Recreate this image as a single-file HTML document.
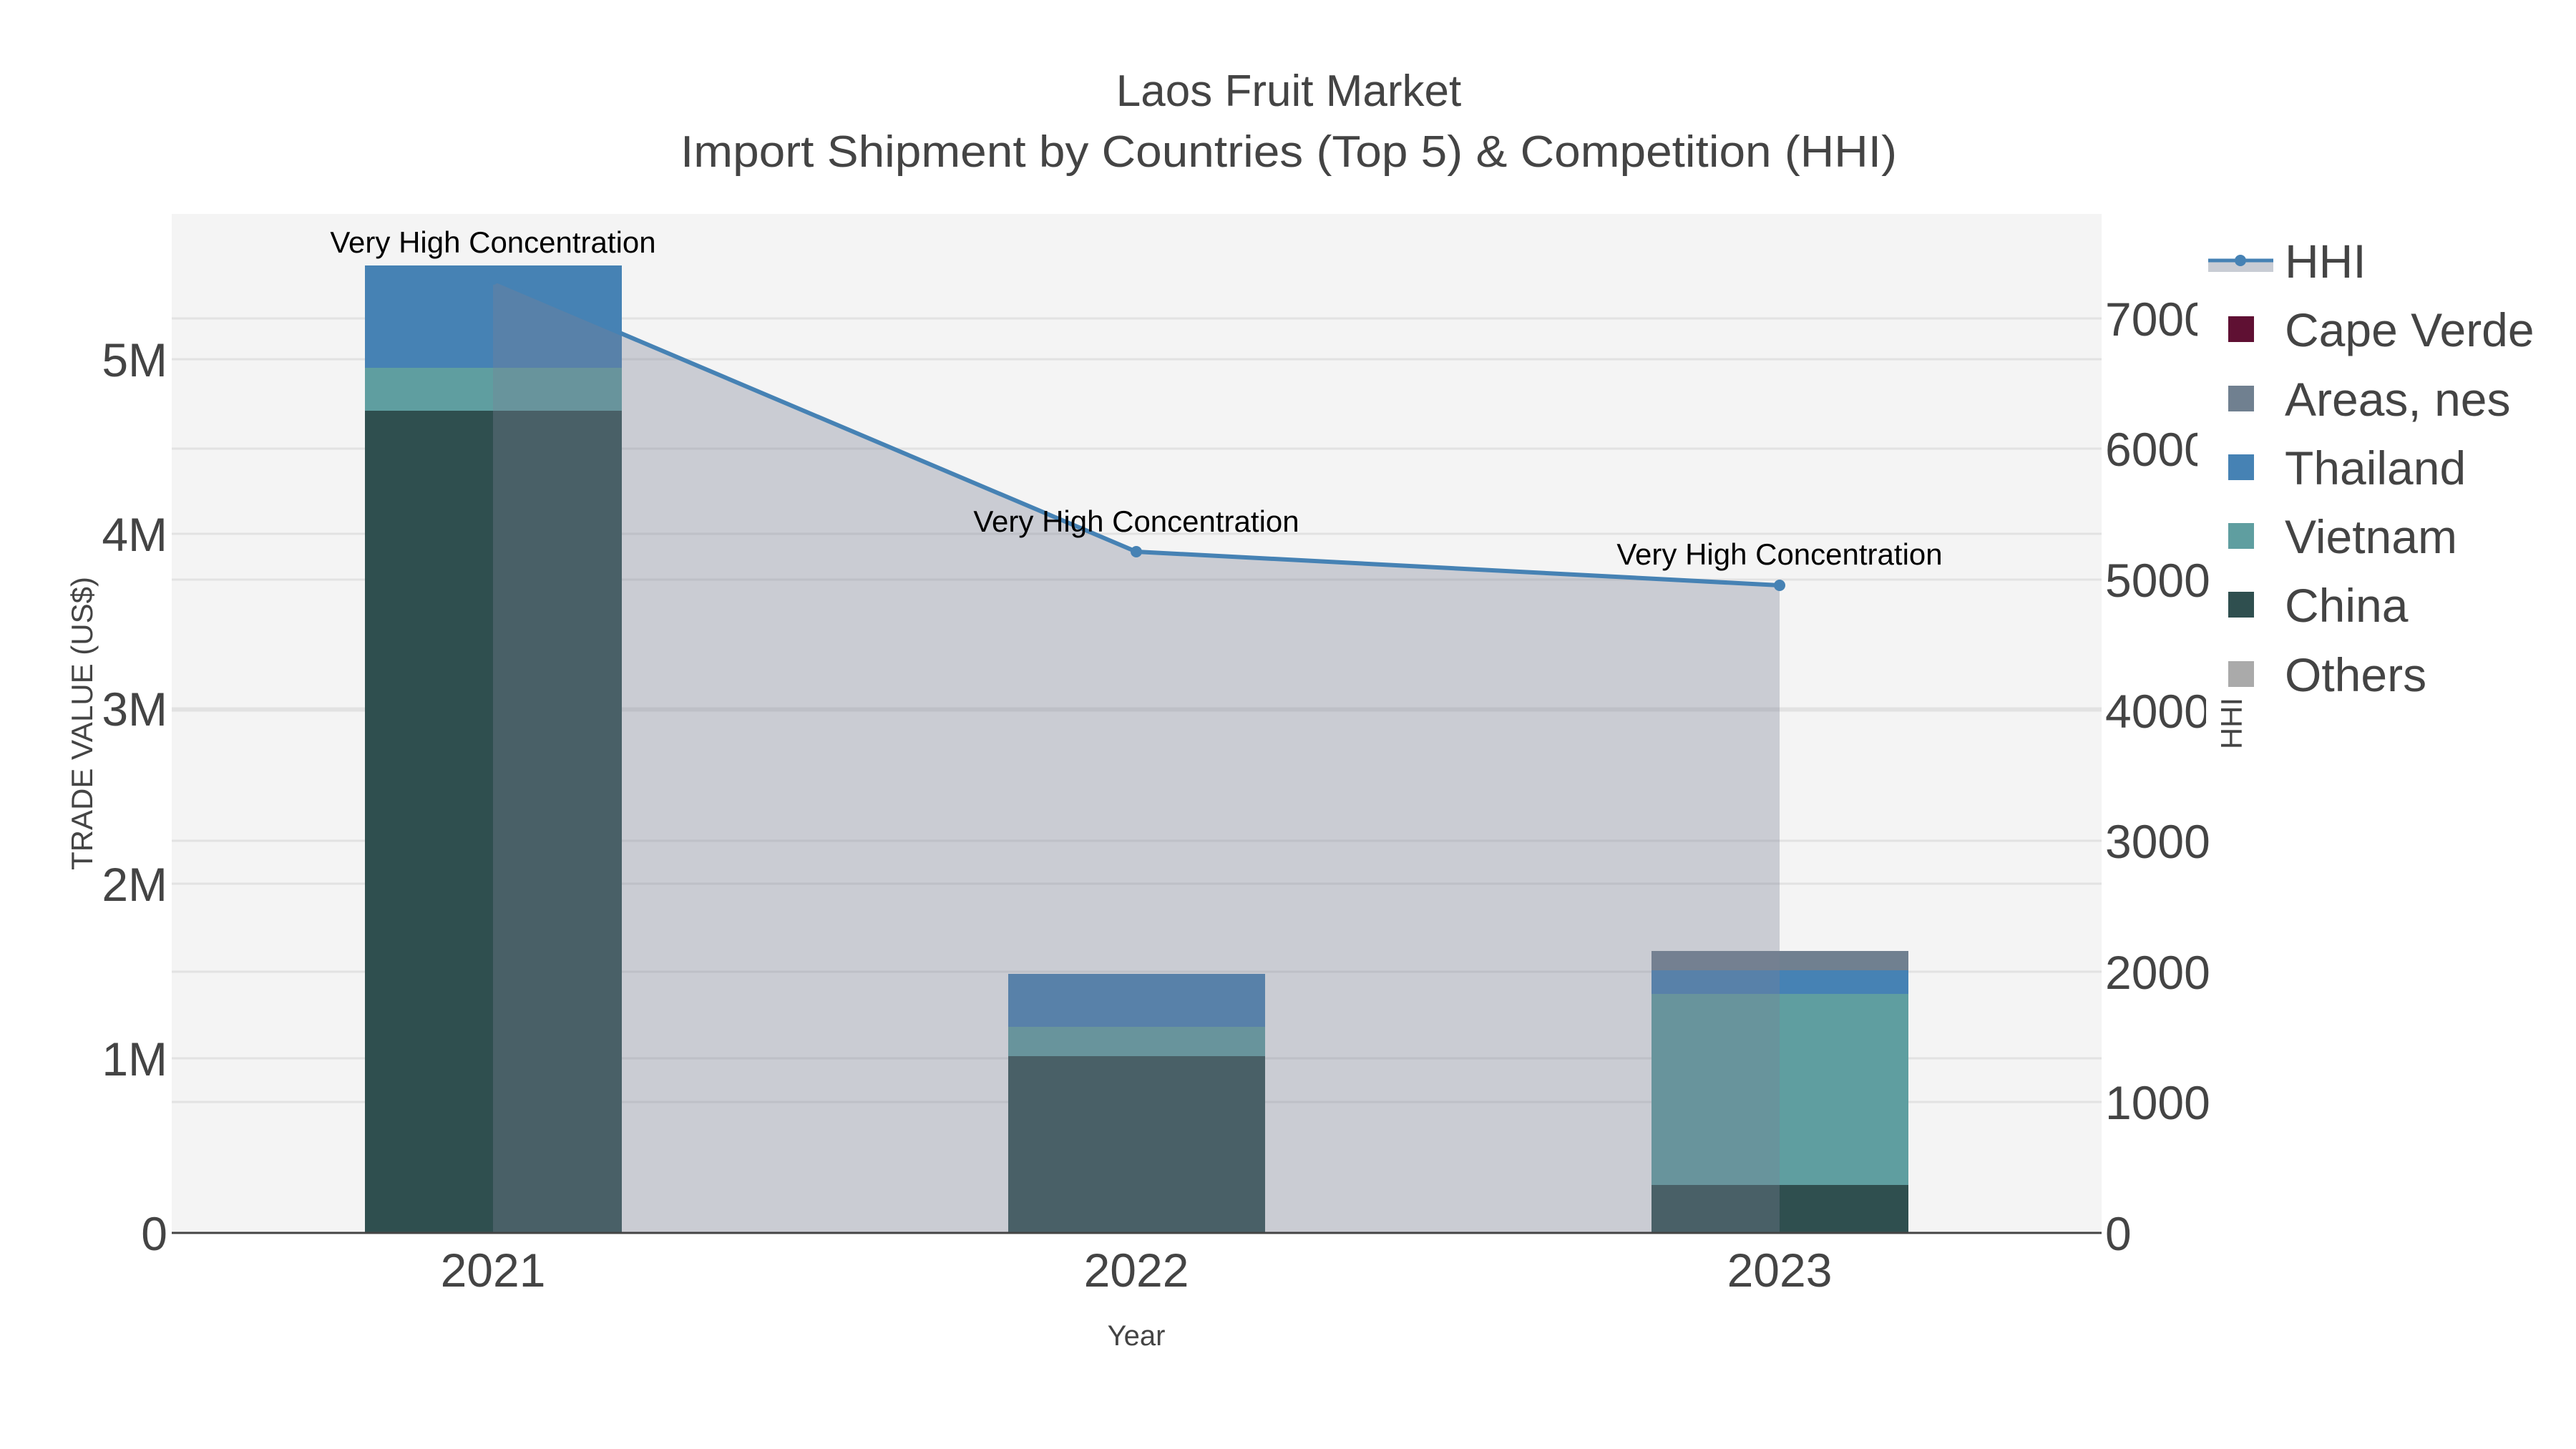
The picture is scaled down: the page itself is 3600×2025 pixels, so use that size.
<!DOCTYPE html>
<html><head><meta charset="utf-8"><style>html,body{margin:0;padding:0;background:#fff}svg{display:block}</style></head>
<body>
<svg width="3600" height="2025" viewBox="0 0 3600 2025" xmlns="http://www.w3.org/2000/svg" font-family="Liberation Sans, Arial, sans-serif">
<rect x="0" y="0" width="3600" height="2025" fill="#fff"/>
<rect x="240" y="299" width="2697" height="1424" fill="#f4f4f4"/>
<g stroke="#e2e2e2" stroke-width="3">
<line x1="240" x2="2937" y1="1479" y2="1479"/><line x1="240" x2="2937" y1="1235" y2="1235"/>
<line x1="240" x2="2937" y1="990" y2="990"/><line x1="240" x2="2937" y1="746" y2="746"/>
<line x1="240" x2="2937" y1="502" y2="502"/>
<line x1="240" x2="2937" y1="1540" y2="1540"/><line x1="240" x2="2937" y1="1358" y2="1358"/>
<line x1="240" x2="2937" y1="1175" y2="1175"/><line x1="240" x2="2937" y1="993" y2="993"/>
<line x1="240" x2="2937" y1="810" y2="810"/><line x1="240" x2="2937" y1="627" y2="627"/>
<line x1="240" x2="2937" y1="445" y2="445"/>
</g>
<rect x="510" y="371" width="359" height="143" fill="#4682b4"/>
<rect x="510" y="514" width="359" height="60" fill="#5f9ea0"/>
<rect x="510" y="574" width="359" height="1149" fill="#2f4f4f"/>
<rect x="1409" y="1361" width="359" height="74" fill="#4682b4"/>
<rect x="1409" y="1435" width="359" height="41" fill="#5f9ea0"/>
<rect x="1409" y="1476" width="359" height="247" fill="#2f4f4f"/>
<rect x="2308" y="1329" width="359" height="27" fill="#708090"/>
<rect x="2308" y="1356" width="359" height="33" fill="#4682b4"/>
<rect x="2308" y="1389" width="359" height="267" fill="#5f9ea0"/>
<rect x="2308" y="1656" width="359" height="67" fill="#2f4f4f"/>
<polygon points="689,390 1588,771 2487,818 2487,1723 689,1723" fill="rgb(122,130,148)" fill-opacity="0.35"/>
<polyline points="689,390 1588,771 2487,818" fill="none" stroke="#4682b4" stroke-width="6"/>
<circle cx="689" cy="390" r="8" fill="#4682b4"/><circle cx="1588" cy="771" r="8" fill="#4682b4"/><circle cx="2487" cy="818" r="8" fill="#4682b4"/>
<line x1="240" x2="2937" y1="1723" y2="1723" stroke="#444" stroke-width="3"/>
<g font-size="42" fill="#000" text-anchor="middle">
<text x="689" y="353">Very High Concentration</text>
<text x="1588" y="743">Very High Concentration</text>
<text x="2487" y="789">Very High Concentration</text>
</g>
<g fill="#444" text-anchor="middle" font-size="62">
<text x="1801" y="148">Laos Fruit Market</text>
<text x="1801" y="233" textLength="1700" lengthAdjust="spacingAndGlyphs">Import Shipment by Countries (Top 5) &amp; Competition (HHI)</text>
</g>
<g fill="#444" font-size="66" text-anchor="end">
<text x="234" y="1747">0</text><text x="234" y="1503">1M</text><text x="234" y="1259">2M</text>
<text x="234" y="1014">3M</text><text x="234" y="770">4M</text><text x="234" y="526">5M</text>
</g>
<text transform="translate(129,1011) rotate(-90)" fill="#444" font-size="42" text-anchor="middle">TRADE VALUE (US$)</text>
<g fill="#444" font-size="66" text-anchor="middle">
<text x="689" y="1798">2021</text><text x="1588" y="1798">2022</text><text x="2487" y="1798">2023</text>
</g>
<text x="1588" y="1880" fill="#444" font-size="40" text-anchor="middle">Year</text>
<g fill="#444" font-size="66">
<text x="2942" y="1747">0</text><text x="2942" y="1564">1000</text><text x="2942" y="1382">2000</text>
<text x="2942" y="1199">3000</text><text x="2942" y="1017">4000</text><text x="2942" y="834">5000</text>
<text x="2942" y="651">6000</text><text x="2942" y="469">7000</text>
</g>
<rect x="3071" y="380" width="200" height="280" fill="#fff"/>
<rect x="3083" y="960" width="20" height="50" fill="#fff"/>
<text transform="translate(3133,1011) rotate(-90)" fill="#444" font-size="42" text-anchor="middle">HHI</text>
<rect x="3086" y="366" width="91" height="14" fill="#c8ccd4"/>
<line x1="3086" x2="3177" y1="364" y2="364" stroke="#4682b4" stroke-width="5"/>
<circle cx="3131" cy="364" r="8" fill="#4682b4"/>
<rect x="3114" y="442" width="36" height="36" fill="#5f1033"/>
<rect x="3114" y="539" width="36" height="36" fill="#708090"/>
<rect x="3114" y="635" width="36" height="36" fill="#4682b4"/>
<rect x="3114" y="731" width="36" height="36" fill="#5f9ea0"/>
<rect x="3114" y="827" width="36" height="36" fill="#2f4f4f"/>
<rect x="3114" y="924" width="36" height="36" fill="#aaaaaa"/>
<g fill="#444" font-size="66">
<text x="3193" y="388">HHI</text>
<text x="3193" y="484">Cape Verde</text>
<text x="3193" y="581">Areas, nes</text>
<text x="3193" y="677">Thailand</text>
<text x="3193" y="773">Vietnam</text>
<text x="3193" y="869">China</text>
<text x="3193" y="966">Others</text>
</g>
</svg>
</body></html>
